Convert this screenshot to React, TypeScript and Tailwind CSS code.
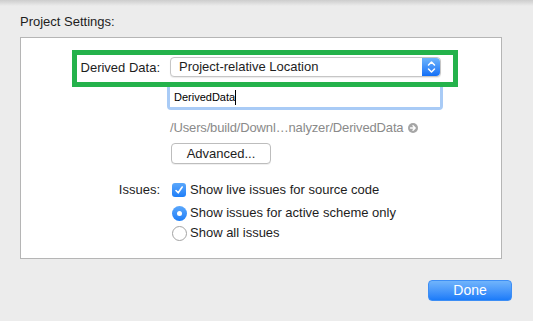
import React from "react";

const font = { fontFamily: '"Liberation Sans", Arial, sans-serif' };

function Stepper() {
  return (
    <div className="w-[18px] h-full rounded-r-[4px] bg-gradient-to-b from-[#6db4fb] to-[#0f6ef6] flex items-center justify-center">
      <svg width="9" height="14" viewBox="0 0 9 14" fill="none" stroke="white" strokeWidth="1.5" strokeLinecap="round" strokeLinejoin="round">
        <path d="M1.5 5 L4.5 2 L7.5 5" />
        <path d="M1.5 9 L4.5 12 L7.5 9" />
      </svg>
    </div>
  );
}

function ArrowCircle() {
  return (
    <svg width="10" height="10" viewBox="0 0 10 10" className="ml-[5px]">
      <circle cx="5" cy="5" r="5" fill="#a6a6a6" />
      <path d="M2.5 5 H7 M5 2.8 L7.2 5 L5 7.2" stroke="white" strokeWidth="1.4" fill="none" strokeLinecap="round" strokeLinejoin="round" />
    </svg>
  );
}

function Checkbox() {
  return (
    <div className="w-[14px] h-[14px] rounded-[3px] bg-gradient-to-b from-[#5aa7fb] to-[#1c7ef8] flex items-center justify-center">
      <svg width="10" height="10" viewBox="0 0 10 10" fill="none" stroke="white" strokeWidth="1.6" strokeLinecap="round" strokeLinejoin="round">
        <path d="M2 5.5 L4.2 7.8 L8.2 2" />
      </svg>
    </div>
  );
}

function Radio({ on }: { on?: boolean }) {
  if (on) {
    return (
      <div className="w-[15px] h-[15px] rounded-full bg-gradient-to-b from-[#5aa7fb] to-[#1c7ef8] flex items-center justify-center">
        <div className="w-[5px] h-[5px] rounded-full bg-white" />
      </div>
    );
  }
  return <div className="w-[15px] h-[15px] rounded-full border border-[#a3a3a3] bg-white" />;
}

export default function App() {
  return (
    <div className="w-[533px] h-[321px] bg-[#ececec] overflow-hidden text-[13px] text-[#1d1d1d]" style={font}>
      <div className="h-[6px] bg-gradient-to-b from-[#cdcdcd] to-[#ececec]" />
      <div className="px-[20px] pt-[8px] leading-[16px]">Project Settings:</div>

      <div className="mx-[20px] mt-[7px] w-[482px] h-[222px] bg-white border border-[#b5b5b5] flex flex-col">
        <div className="ml-[51px] mt-[12px] w-[386px] h-[37px] border-[5px] border-[#24b24b] flex items-start">
          <div className="w-[83px] text-right leading-[16px] mt-[5px] pl-[1px]">Derived Data:</div>
          <div className="ml-[10px] mt-[2px] w-[271px] h-[20px] rounded-[4px] border border-[#c6c6c6] bg-white flex shadow-[0_1px_1px_rgba(0,0,0,0.08)]">
            <div className="flex-1 pl-[8px] leading-[18px]">Project-relative Location</div>
            <Stepper />
          </div>
        </div>

        <div className="ml-[146px] w-[276px] h-[23px] border-x-[3px] border-b-[3px] border-[#a9cbf6] rounded-b-[4px]">
          <div className="h-full bg-white flex items-center pl-[4px] text-[11px] text-black">
            DerivedData
            <span className="inline-block w-[1px] h-[15px] bg-black" />
          </div>
        </div>

        <div className="ml-[149px] mt-[10px] flex items-center text-[#8a8a8a] leading-[16px] tracking-[-0.15px]">
          /Users/build/Downl…nalyzer/DerivedData
          <ArrowCircle />
        </div>

        <div className="ml-[150px] mt-[7px] w-[100px] h-[21px] rounded-[4px] border border-[#bdbdbd] bg-white flex items-center justify-center shadow-[0_1px_0_rgba(0,0,0,0.06)]">
          Advanced...
        </div>

        <div className="mt-[16px] flex">
          <div className="w-[139px] text-right leading-[20px]">Issues:</div>
          <div className="ml-[12px] flex flex-col">
            <div className="h-[20px] flex items-center gap-[4px]">
              <Checkbox />
              <span>Show live issues for source code</span>
            </div>
            <div className="mt-[3px] h-[20px] flex items-center gap-[3px]">
              <Radio on />
              <span>Show issues for active scheme only</span>
            </div>
            <div className="h-[20px] flex items-center gap-[3px]">
              <Radio />
              <span>Show all issues</span>
            </div>
          </div>
        </div>
      </div>

      <div className="flex justify-end pr-[21px] mt-[21px]">
        <div className="w-[84px] h-[21px] rounded-[4px] bg-gradient-to-b from-[#70b4fb] to-[#1a7bf9] border border-[#3d8ef5] text-white text-[14px] flex items-center justify-center">
          Done
        </div>
      </div>
    </div>
  );
}
